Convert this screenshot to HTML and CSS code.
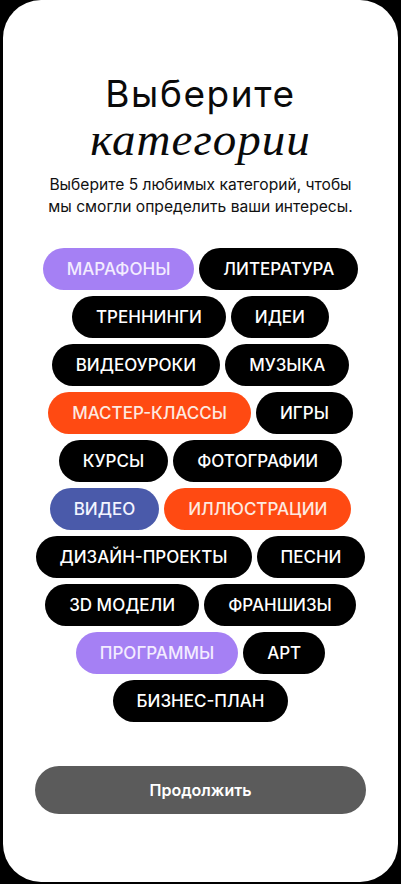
FILE: index.html
```html
<!DOCTYPE html>
<html lang="ru">
<head>
<meta charset="utf-8">
<title>Выберите категории</title>
<link rel="stylesheet" href="styles.css">
</head>
<body>
<div class="screen">
  <header class="head">
    <h1 class="title"><span class="title-sans">Выберите</span><span class="title-serif">категории</span></h1>
    <p class="lead">Выберите 5 любимых категорий, чтобы<br>мы смогли определить ваши интересы.</p>
  </header>
  <div class="chips">
    <div class="row"><span class="chip chip-purple">МАРАФОНЫ</span><span class="chip">ЛИТЕРАТУРА</span></div>
    <div class="row"><span class="chip">ТРЕННИНГИ</span><span class="chip">ИДЕИ</span></div>
    <div class="row"><span class="chip">ВИДЕОУРОКИ</span><span class="chip">МУЗЫКА</span></div>
    <div class="row"><span class="chip chip-orange">МАСТЕР-КЛАССЫ</span><span class="chip">ИГРЫ</span></div>
    <div class="row"><span class="chip">КУРСЫ</span><span class="chip">ФОТОГРАФИИ</span></div>
    <div class="row"><span class="chip chip-blue">ВИДЕО</span><span class="chip chip-orange">ИЛЛЮСТРАЦИИ</span></div>
    <div class="row"><span class="chip">ДИЗАЙН-ПРОЕКТЫ</span><span class="chip">ПЕСНИ</span></div>
    <div class="row"><span class="chip">3D МОДЕЛИ</span><span class="chip">ФРАНШИЗЫ</span></div>
    <div class="row"><span class="chip chip-purple">ПРОГРАММЫ</span><span class="chip">АРТ</span></div>
    <div class="row"><span class="chip">БИЗНЕС-ПЛАН</span></div>
  </div>
  <div class="footer">
    <button class="continue" type="button">Продолжить</button>
  </div>
</div>
</body>
</html>
```

FILE: styles.css
```css
html, body {
  margin: 0;
  padding: 0;
  background: #000;
}
body {
  width: 401px;
  height: 884px;
  overflow: hidden;
  font-family: "Inter", "Roboto", "Liberation Sans", sans-serif;
}
.screen {
  margin: 0 3px 0 3px;
  height: 882px;
  background: #fff;
  border-radius: 38px;
  display: flex;
  flex-direction: column;
  align-items: stretch;
  box-sizing: border-box;
  padding-top: 72px;
}
.head {
  text-align: center;
}
.title {
  margin: 0;
  font-weight: 400;
  display: flex;
  flex-direction: column;
  align-items: center;
  color: #0a0a0a;
}
.title-sans {
  font-family: "Inter", "Liberation Sans", sans-serif;
  font-size: 37px;
  line-height: 44px;
  letter-spacing: 1.6px;
}
.title-serif {
  font-family: "Liberation Serif", "DejaVu Serif", serif;
  font-style: italic;
  font-size: 47px;
  line-height: 46px;
  letter-spacing: 1px;
}
.lead {
  margin: 12px 0 0;
  font-size: 15.6px;
  line-height: 22px;
  color: #111;
}
.chips {
  margin-top: 30px;
  display: flex;
  flex-direction: column;
  gap: 6px;
}
.row {
  display: flex;
  justify-content: center;
  gap: 5px;
}
.chip {
  height: 42px;
  padding: 0 24px;
  border-radius: 21px;
  background: #000;
  color: #fff;
  font-size: 17px;
  font-weight: 500;
  display: flex;
  align-items: center;
  white-space: nowrap;
}
.chip-purple {
  background: #a580f4;
  color: #f3ecff;
}
.chip-orange {
  background: #ff4a12;
  color: #fde9e0;
}
.chip-blue {
  background: #4a5aaa;
  color: #f2f4ff;
}
.footer {
  margin-top: auto;
  padding: 0 32px 68px;
}
.continue {
  width: 100%;
  height: 48px;
  border: 0;
  border-radius: 24px;
  background: #5b5b5b;
  color: #fff;
  font-family: "Inter", "Liberation Sans", sans-serif;
  font-size: 16px;
  font-weight: 600;
}
```
